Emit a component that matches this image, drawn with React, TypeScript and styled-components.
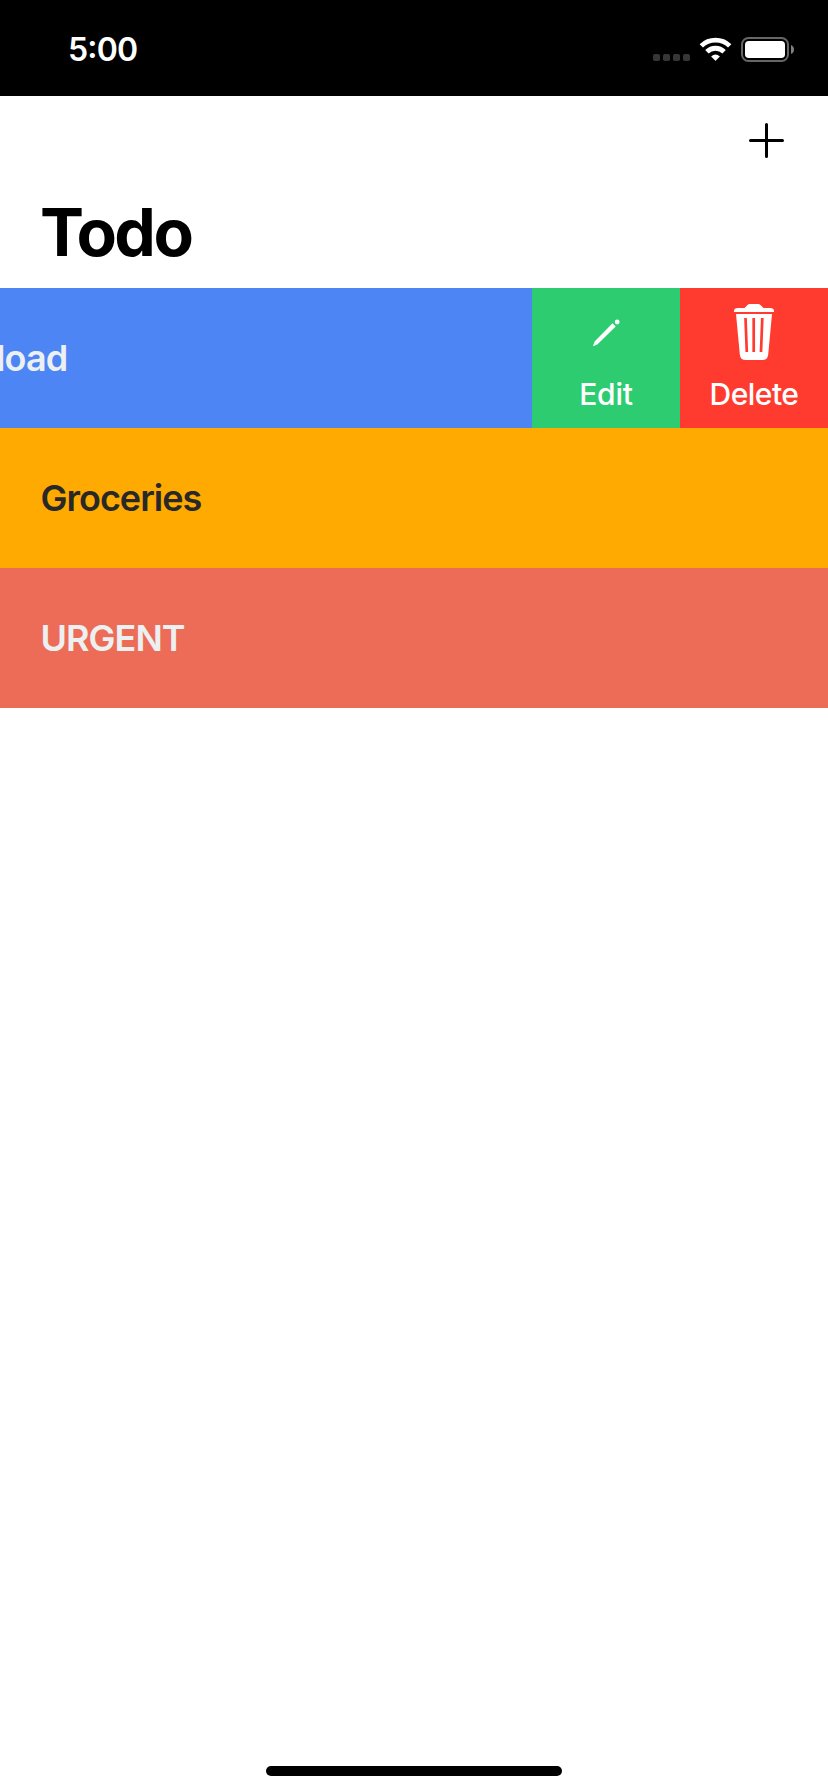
import React from "react";
import styled, { createGlobalStyle } from "styled-components";

const GlobalStyle = createGlobalStyle`
  * { box-sizing: border-box; }
  html, body { margin: 0; padding: 0; background: #fff; }
  body { overflow: hidden; font-family: Inter, "Liberation Sans", sans-serif; }
`;

const Screen = styled.div`
  width: 828px;
  height: 1792px;
  display: flex;
  flex-direction: column;
  background: #fff;
  overflow: hidden;
`;

const StatusBar = styled.header`
  height: 96px;
  flex: none;
  display: flex;
  justify-content: space-between;
  align-items: center;
  padding: 3px 33px 0 68px;
  background: #000;
  color: #fff;
`;

const Clock = styled.time`
  font-size: 32px;
  line-height: 40px;
  font-weight: 600;
  letter-spacing: -0.8px;
  font-feature-settings: "case";
`;

const StatusIcons = styled.svg`
  display: block;
  margin-bottom: 1px;
`;

const NavBar = styled.nav`
  height: 89px;
  flex: none;
  display: flex;
  justify-content: flex-end;
  align-items: center;
  padding-right: 42px;
`;

const AddButton = styled.button`
  width: 39px;
  height: 39px;
  padding: 0;
  border: 0;
  background: none;
  display: flex;
`;

const Title = styled.h1`
  flex: none;
  height: 103px;
  margin: 0;
  padding: 7px 0 0 40px;
  font-size: 66px;
  line-height: 80px;
  font-weight: 700;
  letter-spacing: -2.5px;
  color: #000;
`;

const List = styled.ul`
  margin: 0;
  padding: 0;
  list-style: none;
  flex: 1;
`;

const Row = styled.li<{ $color: string }>`
  height: 140px;
  display: flex;
  background: ${(p) => p.$color};
`;

const Label = styled.div<{ $color: string; $inset?: number; $tracking?: number }>`
  flex: 1;
  display: flex;
  align-items: center;
  overflow: hidden;
  text-indent: ${(p) => p.$inset ?? 40.5}px;
  font-size: 36px;
  font-weight: 600;
  letter-spacing: ${(p) => p.$tracking ?? 0}px;
  color: ${(p) => p.$color};
`;

const Action = styled.button<{ $color: string }>`
  width: 148px;
  height: 140px;
  padding: 12px 0 0;
  border: 0;
  display: flex;
  flex-direction: column;
  align-items: center;
  gap: 14px;
  background: ${(p) => p.$color};
  color: #fff;
  font-family: inherit;
  font-size: 30px;
  font-weight: 500;
  line-height: 40px;
`;

const ActionText = styled.span<{ $tracking: number }>`
  letter-spacing: ${(p) => p.$tracking}px;
`;

const HomeArea = styled.footer`
  flex: none;
  height: 26px;
  display: flex;
  justify-content: center;
  align-items: flex-start;
`;

const HomeIndicator = styled.div`
  width: 296px;
  height: 10px;
  border-radius: 5px;
  background: #000;
`;

const PencilIcon = () => (
  <svg width="60" height="60" viewBox="576 300 60 60" fill="#fff">
    <path d="M612.5 323.3 615.7 326.5 597.6 344.3 593.8 346Q592.8 346.3 593.2 345.2L594.9 341.3Z" />
    <circle cx="617.2" cy="322" r="2.4" />
  </svg>
);

const TrashIcon = () => (
  <svg width="60" height="60" viewBox="724 300 60 60">
    <path fill="#fff" d="M734 312V311Q734 308 738 308H744.5L747.5 305Q748.5 304 750 304H758Q759.5 304 760.5 305L763.5 308H770Q774 308 774 311V312Z" />
    <path fill="#fff" d="M736 314H772L768.2 354.5Q767.6 360 762.5 360H745.5Q740.4 360 739.8 354.5Z" />
    <path fill="none" stroke="#ff3b30" strokeWidth="2.7" d="M745.5 318 746.8 352M753.7 318V352M762.3 318 761 352" />
  </svg>
);

export default function App() {
  return (
    <>
      <GlobalStyle />
      <Screen>
        <StatusBar>
          <Clock>5:00</Clock>
          <StatusIcons width="143" height="30" viewBox="652 34 143 30">
            <g fill="#363636">
              <rect x="653" y="54" width="7" height="7" rx="1.8" />
              <rect x="663" y="54" width="7" height="7" rx="1.8" />
              <rect x="673" y="54" width="7" height="7" rx="1.8" />
              <rect x="683" y="54" width="7" height="7" rx="1.8" />
            </g>
            <g fill="none" stroke="#fff" strokeWidth="4.8">
              <path d="M701.3 45.9A20.4 20.4 0 0 1 729.7 45.9" />
              <path d="M706.9 51.8A12.2 12.2 0 0 1 724.1 51.8" />
            </g>
            <path fill="#fff" d="M711.1 56.4Q715.5 52.4 719.9 56.4L715.9 60.6Q715.5 61 715.1 60.6Z" />
            <rect x="742" y="38" width="46" height="23" rx="6.5" fill="none" stroke="#666" strokeWidth="2" />
            <rect x="745" y="41" width="40" height="17" rx="3.8" fill="#fff" />
            <path d="M791 45Q794 46.5 794 49.5T791 54Z" fill="#808080" />
          </StatusIcons>
        </StatusBar>
        <NavBar>
          <AddButton aria-label="Add">
            <svg width="39" height="39" viewBox="747 121 39 39" fill="none" stroke="#000" strokeWidth="3" strokeLinecap="round">
              <path d="M750.5 140.5H782.5M766.5 124.5V156.5" />
            </svg>
          </AddButton>
        </NavBar>
        <Title>Todo</Title>
        <List>
          <Row $color="#4d85f5">
            <Label $color="#ecf0f1" $inset={-4} $tracking={-0.9}>load</Label>
            <Action $color="#2ecc71">
              <PencilIcon />
              <ActionText $tracking={-0.2}>Edit</ActionText>
            </Action>
            <Action $color="#ff3b30">
              <TrashIcon />
              <ActionText $tracking={-0.5}>Delete</ActionText>
            </Action>
          </Row>
          <Row $color="#ffaa00">
            <Label $color="#282828" $tracking={-1}>Groceries</Label>
          </Row>
          <Row $color="#ed6c58">
            <Label $color="#ecf0f1" $tracking={-0.95}>URGENT</Label>
          </Row>
        </List>
        <HomeArea>
          <HomeIndicator />
        </HomeArea>
      </Screen>
    </>
  );
}
